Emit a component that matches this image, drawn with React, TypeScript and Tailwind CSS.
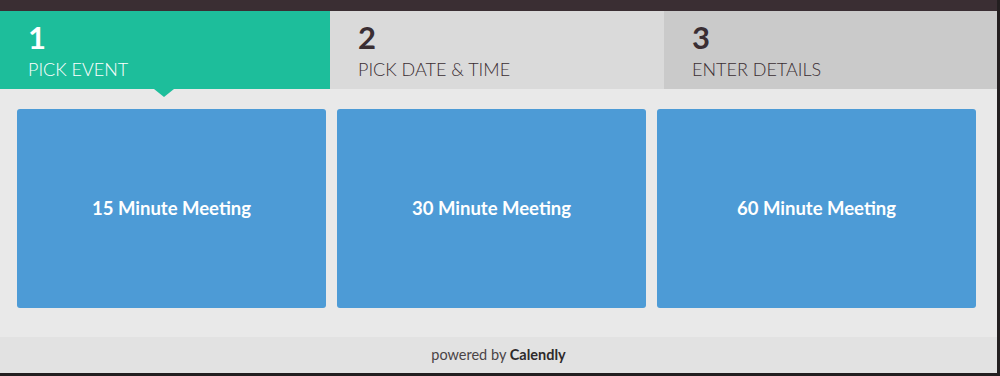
import { ReactNode } from 'react'
import clsx from 'clsx'

const steps = [
  { num: '1', label: 'Pick Event', active: true, bg: 'bg-[#1dbe9b]', width: 'w-[330px]' },
  { num: '2', label: 'Pick Date & Time', active: false, bg: 'bg-[#dadada]', width: 'w-[334px]' },
  { num: '3', label: 'Enter Details', active: false, bg: 'bg-[#cacaca]', width: 'flex-1' }
]

const events = ['15 Minute Meeting', '30 Minute Meeting', '60 Minute Meeting']

function StepTab({
  num,
  label,
  active,
  bg,
  width
}: {
  num: string
  label: string
  active: boolean
  bg: string
  width: string
}) {
  return (
    <div className={clsx('relative h-[78px] pl-7 pt-[10px]', bg, width)}>
      <div
        className={clsx(
          'text-[31px] font-bold leading-[32px]',
          active ? 'text-white' : 'text-[#3a2e33]'
        )}
      >
        {num}
      </div>
      <div
        className={clsx(
          'mt-[5px] text-[18px] font-light uppercase leading-[22px]',
          active ? 'text-white' : 'text-[#3a2e33]'
        )}
      >
        {label}
      </div>
      {active && (
        <div className="absolute left-[154px] top-full h-0 w-0 border-x-[10px] border-t-[8px] border-x-transparent border-t-[#1dbe9b]" />
      )}
    </div>
  )
}

function EventCard({ children }: { children: ReactNode }) {
  return (
    <button className="flex h-[199px] items-center justify-center rounded-[3px] bg-[#4d9bd6] text-[18.5px] font-bold text-white">
      {children}
    </button>
  )
}

export default function App() {
  return (
    <div
      className="flex h-[376px] w-[1000px] flex-col bg-[#231f20] pr-[3px] pb-[3px]"
      style={{ fontFamily: 'Lato, "Open Sans", sans-serif' }}
    >
      <div className="h-[11px] bg-[#3a2e33]" />

      <div className="flex">
        {steps.map((s) => (
          <StepTab key={s.num} {...s} />
        ))}
      </div>

      <div className="flex-1 bg-[#e9e9e9] pl-[17px] pt-[20px]">
        <div className="grid grid-cols-[309px_309px_319px] gap-[11px]">
          {events.map((e) => (
            <EventCard key={e}>{e}</EventCard>
          ))}
        </div>
      </div>

      <div className="flex h-[36px] items-center justify-center bg-[#e2e2e2] text-[14.5px] text-[#4a4446]">
        powered by&nbsp;<span className="font-bold text-[#2e2a2b]">Calendly</span>
      </div>
    </div>
  )
}
